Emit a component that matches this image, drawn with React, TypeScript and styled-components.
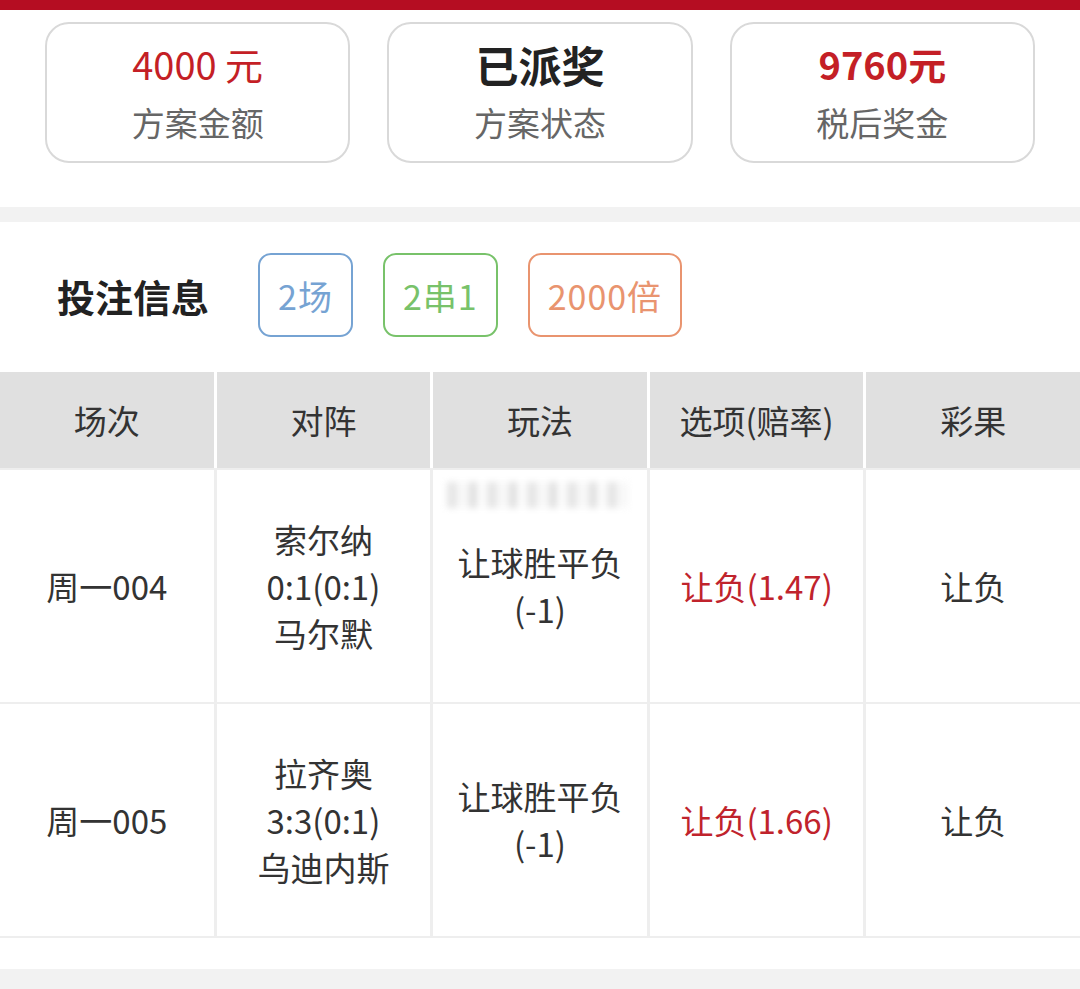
import React from 'react';
import styled, { createGlobalStyle } from 'styled-components';

const GlobalStyle = createGlobalStyle`
  body {
    margin: 0;
    background: #f2f2f2;
    font-family: "Noto Sans CJK SC", "Noto Sans", sans-serif;
    color: #333;
  }
`;

const Page = styled.div`
  width: 1080px;
  height: 989px;
  overflow: hidden;
  background: #f2f2f2;
`;

const TopBar = styled.div`
  height: 10px;
  background: #b50d22;
`;

const Summary = styled.section`
  background: #fff;
  padding: 12px 45px 44px;
  display: grid;
  grid-template-columns: repeat(3, 1fr);
  gap: 37px;
`;

const Card = styled.div`
  height: 137px;
  border: 2px solid #d9d9d9;
  border-radius: 24px;
  display: flex;
  flex-direction: column;
  align-items: center;
  justify-content: center;
  gap: 6px;
`;

const CardValue = styled.div<{ tone: 'red' | 'dark'; size: number; bold?: boolean }>`
  font-size: ${(p) => p.size}px;
  line-height: 52px;
  font-weight: ${(p) => (p.bold ? 700 : 400)};
  color: ${(p) => (p.tone === 'red' ? '#c41f26' : '#222')};
`;

const CardLabel = styled.div`
  font-size: 33px;
  line-height: 52px;
  color: #666;
`;

const Gap = styled.div`
  height: 15px;
`;

const BetSection = styled.section`
  background: #fff;
  padding-bottom: 31px;
`;

const InfoRow = styled.div`
  height: 150px;
  display: flex;
  align-items: center;
  padding: 0 0 0 57px;
`;

const InfoTitle = styled.h2`
  margin: 0 49px 4px 0;
  font-size: 38px;
  font-weight: 700;
  color: #222;
`;

const Tag = styled.span<{ color: string }>`
  height: 80px;
  padding: 0 18px;
  margin-right: 30px;
  margin-top: -4px;
  display: inline-flex;
  align-items: center;
  border: 2px solid ${(p) => p.color};
  border-radius: 13px;
  color: ${(p) => p.color};
  font-size: 34px;
  letter-spacing: 1px;
`;

const HeadRow = styled.div`
  display: grid;
  grid-template-columns: repeat(5, 1fr);
  gap: 3px;
  background: #fff;
`;

const HeadCell = styled.div`
  height: 96px;
  background: #e0e0e0;
  display: flex;
  align-items: center;
  justify-content: center;
  font-size: 33px;
  color: #333;
`;

const BodyRow = styled.div`
  display: grid;
  grid-template-columns: repeat(5, 1fr);
  gap: 3px;
  background: #eeeeee;
  padding: 2px 0;
  & + & {
    padding-top: 0;
  }
`;

const BodyCell = styled.div<{ red?: boolean }>`
  position: relative;
  height: 232px;
  background: #fff;
  display: flex;
  flex-direction: column;
  align-items: center;
  justify-content: center;
  text-align: center;
  font-size: 33px;
  line-height: 47px;
  color: ${(p) => (p.red ? '#c0232c' : '#333')};
`;

const Blurred = styled.span`
  position: absolute;
  top: 12px;
  left: 14px;
  right: 18px;
  height: 26px;
  filter: blur(3px);
  background: repeating-linear-gradient(
    90deg,
    #dcdcdc 0 10px,
    #f6f6f6 10px 22px,
    #d4d4d4 22px 30px,
    #fbfbfb 30px 40px
  );
  opacity: 0.7;
`;

const rows = [
  { no: '周一004', home: '索尔纳', score: '0:1(0:1)', away: '马尔默', odds: '让负(1.47)', mark: true },
  { no: '周一005', home: '拉齐奥', score: '3:3(0:1)', away: '乌迪内斯', odds: '让负(1.66)', mark: false },
];

export default function App() {
  return (
    <Page>
      <GlobalStyle />
      <TopBar />
      <Summary>
        <Card>
          <CardValue tone="red" size={38}>4000 元</CardValue>
          <CardLabel>方案金额</CardLabel>
        </Card>
        <Card>
          <CardValue tone="dark" size={43} bold>已派奖</CardValue>
          <CardLabel>方案状态</CardLabel>
        </Card>
        <Card>
          <CardValue tone="red" size={38} bold>9760元</CardValue>
          <CardLabel>税后奖金</CardLabel>
        </Card>
      </Summary>
      <Gap />
      <BetSection>
        <InfoRow>
          <InfoTitle>投注信息</InfoTitle>
          <Tag color="#76a3d3">2场</Tag>
          <Tag color="#78c26a">2串1</Tag>
          <Tag color="#e9946f">2000倍</Tag>
        </InfoRow>
        <HeadRow>
          <HeadCell>场次</HeadCell>
          <HeadCell>对阵</HeadCell>
          <HeadCell>玩法</HeadCell>
          <HeadCell>选项(赔率)</HeadCell>
          <HeadCell>彩果</HeadCell>
        </HeadRow>
        {rows.map((r) => (
          <BodyRow key={r.no}>
            <BodyCell>{r.no}</BodyCell>
            <BodyCell>
              <div>{r.home}</div>
              <div>{r.score}</div>
              <div>{r.away}</div>
            </BodyCell>
            <BodyCell>
              {r.mark && <Blurred />}
              <div>让球胜平负</div>
              <div>(-1)</div>
            </BodyCell>
            <BodyCell red>{r.odds}</BodyCell>
            <BodyCell>让负</BodyCell>
          </BodyRow>
        ))}
      </BetSection>
    </Page>
  );
}
